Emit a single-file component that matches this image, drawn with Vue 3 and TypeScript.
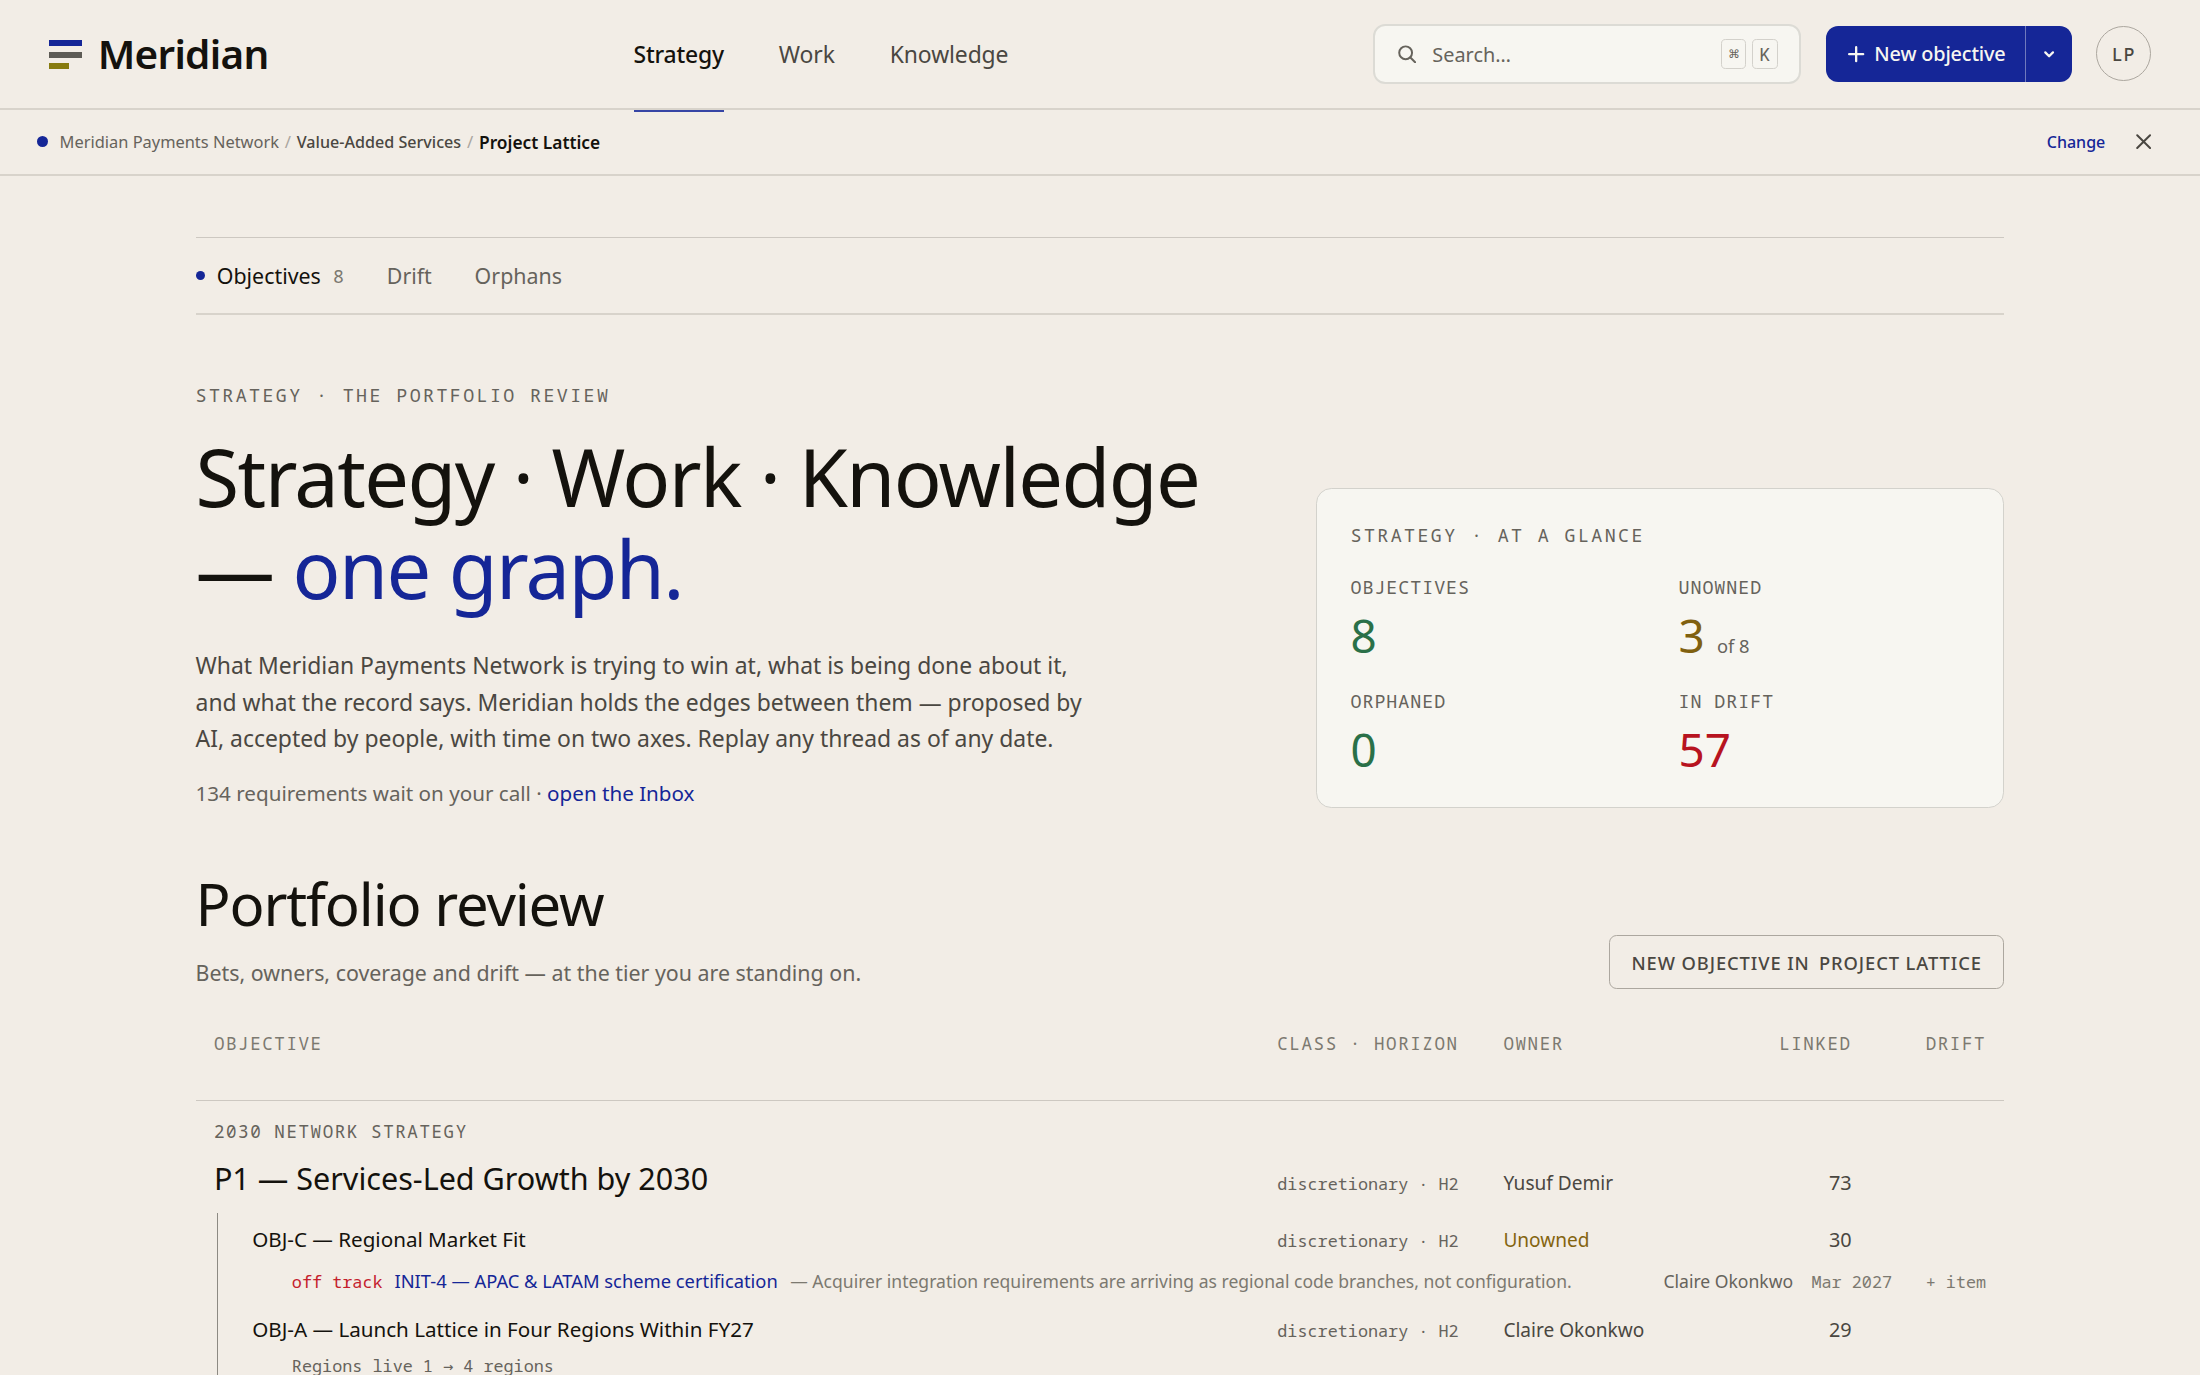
<script setup lang="ts">
interface Stat {
  label: string
  value: string
  tone: string
  note?: string
}

interface ObjectiveRow {
  title: string
  horizon: string
  owner: string
  unowned?: boolean
  linked: number
}

const navItems: string[] = ['Strategy', 'Work', 'Knowledge']

const stats: Stat[] = [
  { label: 'Objectives', value: '8', tone: 'good' },
  { label: 'Unowned', value: '3', tone: 'warn', note: 'of 8' },
  { label: 'Orphaned', value: '0', tone: 'good' },
  { label: 'In drift', value: '57', tone: 'bad' },
]

const pillar: ObjectiveRow = {
  title: 'P1 — Services-Led Growth by 2030',
  horizon: 'discretionary · H2',
  owner: 'Yusuf Demir',
  linked: 73,
}

const marketFit: ObjectiveRow = {
  title: 'OBJ-C — Regional Market Fit',
  horizon: 'discretionary · H2',
  owner: 'Unowned',
  unowned: true,
  linked: 30,
}

const launch: ObjectiveRow = {
  title: 'OBJ-A — Launch Lattice in Four Regions Within FY27',
  horizon: 'discretionary · H2',
  owner: 'Claire Okonkwo',
  linked: 29,
}
</script>

<template>
  <div class="page">
    <header class="topbar">
      <div class="brand">
        <span class="mark"><i class="m1"></i><i class="m2"></i><i class="m3"></i></span>
        <span class="wordmark">Meridian</span>
      </div>
      <nav class="nav">
        <a v-for="(item, i) in navItems" :key="item" :class="{ active: i === 0 }">{{ item }}</a>
      </nav>
      <div class="actions">
        <div class="search">
          <svg class="search-icon" viewBox="0 0 12 12" fill="none" stroke="currentColor" stroke-width="1.3" stroke-linecap="round">
            <circle cx="5" cy="5.1" r="4.2" />
            <path d="M8.1 8.2 11.2 11.3" />
          </svg>
          <span class="placeholder">Search…</span>
          <span class="keys"><kbd class="cmd">⌘</kbd><kbd>K</kbd></span>
        </div>
        <div class="split">
          <button class="create">
            <svg class="plus" viewBox="0 0 12 12" fill="none" stroke="currentColor" stroke-width="1.5" stroke-linecap="round">
              <path d="M6 1.4v9.2M1.4 6h9.2" />
            </svg>
            New objective
          </button>
          <button class="more" aria-label="More">
            <svg viewBox="0 0 8 8" fill="none" stroke="currentColor" stroke-width="1.5" stroke-linecap="round" stroke-linejoin="round">
              <path d="M1.5 2.9 4 5.4l2.5-2.5" />
            </svg>
          </button>
        </div>
        <div class="avatar">LP</div>
      </div>
    </header>

    <div class="context">
      <span class="context-dot"></span>
      <span class="crumb">Meridian Payments Network</span>
      <span class="sep">/</span>
      <span class="crumb mid">Value-Added Services</span>
      <span class="sep">/</span>
      <span class="crumb here">Project Lattice</span>
      <a class="change">Change</a>
      <svg class="close" viewBox="0 0 10 10" fill="none" stroke="currentColor" stroke-width="1.3" stroke-linecap="round">
        <path d="M.8.8l8.4 8.4M9.2.8L.8 9.2" />
      </svg>
    </div>

    <main>
      <div class="tabs">
        <a class="tab active"><span class="tab-dot"></span>Objectives<span class="count">8</span></a>
        <a class="tab">Drift</a>
        <a class="tab">Orphans</a>
      </div>

      <section class="hero">
        <div class="intro">
          <p class="eyebrow">Strategy · The portfolio review</p>
          <h1>Strategy · Work · Knowledge<br />— <em>one graph.</em></h1>
          <p class="lede">
            What Meridian Payments Network is trying to win at, what is being done about it,<br />
            and what the record says. Meridian holds the edges between them — proposed by<br />
            AI, accepted by people, with time on two axes. Replay any thread as of any date.
          </p>
          <p class="waiting">134 requirements wait on your call · <a>open the Inbox</a></p>
        </div>
        <aside class="glance">
          <p class="glance-title">Strategy · At a glance</p>
          <div class="stats">
            <div v-for="s in stats" :key="s.label" class="stat">
              <div class="stat-label">{{ s.label }}</div>
              <div class="stat-value" :class="s.tone">
                {{ s.value }}<span v-if="s.note" class="note">{{ s.note }}</span>
              </div>
            </div>
          </div>
        </aside>
      </section>

      <section class="review-head">
        <div>
          <h2>Portfolio review</h2>
          <p class="sub">Bets, owners, coverage and drift — at the tier you are standing on.</p>
        </div>
        <button class="outline"><span>New objective in</span><span>Project Lattice</span></button>
      </section>

      <section class="table">
        <div class="grid thead">
          <span>Objective</span><span>Class · Horizon</span><span>Owner</span>
          <span class="right">Linked</span><span class="right">Drift</span>
        </div>
        <p class="group">2030 Network Strategy</p>
        <div class="grid row pillar">
          <span class="title">{{ pillar.title }}</span>
          <span class="horizon">{{ pillar.horizon }}</span>
          <span class="owner">{{ pillar.owner }}</span>
          <span class="linked">{{ pillar.linked }}</span>
        </div>
        <div class="children">
          <div class="grid row child">
            <span class="title">{{ marketFit.title }}</span>
            <span class="horizon">{{ marketFit.horizon }}</span>
            <span class="owner" :class="{ unowned: marketFit.unowned }">{{ marketFit.owner }}</span>
            <span class="linked">{{ marketFit.linked }}</span>
          </div>
          <div class="initiative">
            <span class="status">off track</span>
            <a class="init-name">INIT-4 — APAC &amp; LATAM scheme certification</a>
            <span class="reason">— Acquirer integration requirements are arriving as regional code branches, not configuration.</span>
            <span class="init-owner">Claire Okonkwo</span>
            <span class="due">Mar 2027</span>
            <span class="add">+ item</span>
          </div>
          <div class="grid row child">
            <span class="title">{{ launch.title }}</span>
            <span class="horizon">{{ launch.horizon }}</span>
            <span class="owner">{{ launch.owner }}</span>
            <span class="linked">{{ launch.linked }}</span>
          </div>
          <div class="measure">Regions live 1 <span class="arrow">→</span> 4 regions</div>
        </div>
      </section>
    </main>
  </div>
</template>

<style>
/* 1rem = ten design units on the 1440-unit wide canvas */
html {
  font-size: 15.27778px;
  background: #f2ede6;
}
body {
  margin: 0;
  overflow: hidden;
}
</style>

<style scoped>
* {
  box-sizing: border-box;
}
p, h1, h2 {
  margin: 0;
  font-weight: 400;
}
button {
  font: inherit;
  border: 0;
  background: none;
  padding: 0;
}
.page {
  --ink: #14120d;
  --ink-2: #4a4741;
  --ink-3: #66635c;
  --ink-4: #7c7970;
  --blue: #152697;
  --line: #cdc8c1;
  --card: #f7f6f1;
  --mono: "Noto Sans Mono", "DejaVu Sans Mono", monospace;
  width: 144rem;
  height: 90rem;
  overflow: hidden;
  background: #f2ede6;
  color: var(--ink);
  font-family: "Noto Sans", sans-serif;
  font-size: 1.4rem;
  white-space: nowrap;
}

/* Top bar */
.topbar {
  display: flex;
  height: 7.2rem;
  padding: 0 3.2rem;
  border-bottom: 2px solid #d8d3cb;
  align-items: center;
}
.brand {
  display: flex;
  align-items: center;
  width: 38.27rem;
}
.mark {
  display: flex;
  flex-direction: column;
  gap: 6px;
  width: 2.2rem;
  margin-right: 1rem;
  padding-top: 1px;
}
.mark i {
  display: block;
  height: 6px;
}
.m1 { background: var(--blue); }
.m2 { background: #5d5b55; }
.m3 { background: #877b0f; width: 1.3rem; margin-top: -1px; }
.wordmark {
  font-size: 2.65rem;
  font-weight: 600;
  letter-spacing: -0.018em;
  line-height: 3.2rem;
}
.nav {
  display: flex;
  gap: 3.6rem;
  align-self: stretch;
}
.nav a {
  display: flex;
  align-items: center;
  position: relative;
  font-size: 1.5rem;
  letter-spacing: -0.005em;
  color: var(--ink-2);
}
.nav a.active {
  color: var(--ink);
  font-weight: 500;
  letter-spacing: -0.009em;
}
.nav a.active::after {
  content: "";
  position: absolute;
  left: 0;
  right: 0;
  bottom: -4px;
  height: 2px;
  background: #3745a5;
}
.actions {
  display: flex;
  align-items: center;
  margin-left: auto;
}
.search {
  display: flex;
  align-items: center;
  width: 28rem;
  height: 3.9rem;
  padding: 0 1.35rem 0 1.5rem;
  border: 2px solid #dcdbd5;
  border-radius: 0.8rem;
  background: var(--card);
  color: var(--ink-3);
}
.search-icon {
  width: 1.2rem;
  height: 1.2rem;
  margin-right: 1.05rem;
}
.placeholder {
  padding-top: 0.12rem;
  font-size: 1.3rem;
}
.keys {
  display: flex;
  gap: 0.36rem;
  margin-left: auto;
}
kbd {
  display: flex;
  align-items: center;
  justify-content: center;
  width: 1.72rem;
  height: 1.9rem;
  border: 1.5px solid #d3d1cb;
  border-radius: 0.3rem;
  font-family: var(--mono);
  font-size: 1.2rem;
}
.cmd {
  width: 1.65rem;
  font-size: 1.1rem;
}
.split {
  display: flex;
  width: 16.1rem;
  height: 3.7rem;
  margin-left: 1.63rem;
  border-radius: 0.8rem;
  overflow: hidden;
  background: var(--blue);
  color: #f7f6f1;
}
.create {
  display: flex;
  align-items: center;
  width: 13.05rem;
  padding-left: 1.4rem;
  font-size: 1.3rem;
  font-weight: 500;
  letter-spacing: -0.008em;
  color: inherit;
}
.plus {
  width: 1.2rem;
  height: 1.2rem;
  margin-right: 0.58rem;
}
.more {
  display: flex;
  flex: 1;
  align-items: center;
  justify-content: center;
  border-left: 1px solid #6f79bd;
  color: inherit;
}
.more svg {
  width: 0.8rem;
  height: 0.8rem;
}
.avatar {
  display: flex;
  align-items: center;
  justify-content: center;
  width: 3.6rem;
  height: 3.6rem;
  margin-left: 1.6rem;
  border: 1px solid #aca79f;
  border-radius: 50%;
  font-family: var(--mono);
  font-size: 1.2rem;
  font-weight: 500;
  letter-spacing: 0.05em;
  color: var(--ink-2);
}

/* Context strip */
.context {
  display: flex;
  align-items: center;
  height: 4.3rem;
  padding: 0 3.2rem 0 2.4rem;
  border-bottom: 2px solid #d8d3cb;
  font-size: 1.1rem;
}
.context-dot {
  width: 11px;
  height: 11px;
  margin-right: 0.78rem;
  border-radius: 50%;
  background: var(--blue);
}
.crumb { font-size: 1.075rem; color: var(--ink-3); }
.mid { font-size: 1.055rem; color: var(--ink-2); font-weight: 500; }
.here { font-size: 1.135rem; color: var(--ink); font-weight: 600; }
.sep { margin: 0 0.38rem; color: #aaa69f; }
.change {
  margin-left: auto;
  font-size: 1.05rem;
  color: var(--blue);
  font-weight: 500;
}
.close {
  width: 1rem;
  height: 1rem;
  margin-left: 2rem;
  color: var(--ink-2);
}

/* Content */
main {
  padding: 4rem 12.8rem 0;
}
.tabs {
  display: flex;
  align-items: center;
  gap: 2.8rem;
  height: 5.1rem;
  padding-top: 0.04rem;
  border-top: 1px solid var(--line);
  border-bottom: 2px solid #d8d3cb;
  font-size: 1.4rem;
}
.tab {
  display: flex;
  align-items: center;
  color: var(--ink-3);
}
.tab.active { color: var(--ink); }
.tab-dot {
  width: 9px;
  height: 9px;
  margin-right: 0.8rem;
  border-radius: 50%;
  background: var(--blue);
}
.count {
  margin-left: 0.8rem;
  font-family: var(--mono);
  font-size: 1.2rem;
  color: var(--ink-4);
}
.hero {
  display: flex;
  justify-content: space-between;
  align-items: flex-end;
  margin-top: 4.35rem;
}
.eyebrow, .glance-title {
  font-family: var(--mono);
  font-size: 1.2rem;
  line-height: 1.8rem;
  letter-spacing: 0.13em;
  text-transform: uppercase;
  color: var(--ink-3);
}
h1 {
  margin-top: 1.46rem;
  font-size: 5.2rem;
  line-height: 6rem;
  letter-spacing: -0.02em;
}
h1 em {
  font-style: normal;
  color: var(--blue);
}
.lede {
  margin-top: 2.21rem;
  font-size: 1.5rem;
  line-height: 2.39rem;
  color: var(--ink-2);
}
.waiting {
  margin-top: 1.38rem;
  font-size: 1.35rem;
  line-height: 1.9rem;
  color: var(--ink-3);
}
.waiting a { color: var(--blue); }
.glance {
  width: 45.07rem;
  height: 20.95rem;
  padding: 2.05rem 2.2rem;
  border: 1.5px solid #d3d2cc;
  border-radius: 1rem;
  background: var(--card);
}
.glance-title { line-height: 2rem; }
.stats {
  display: grid;
  grid-template-columns: 1fr 1fr;
  column-gap: 2.4rem;
  margin-top: 1.46rem;
  row-gap: 1.57rem;
}
.stat-label {
  font-family: var(--mono);
  font-size: 1.2rem;
  line-height: 1.8rem;
  letter-spacing: 0.052em;
  text-transform: uppercase;
  color: var(--ink-3);
}
.stat-value {
  margin-top: 0.5rem;
  font-size: 3rem;
  line-height: 3.6rem;
}
.good { color: #2a7048; }
.warn { color: #80600f; }
.bad { color: #b71320; }
.note {
  margin-left: 0.8rem;
  font-size: 1.2rem;
  line-height: 1;
  color: var(--ink-3);
}
.review-head {
  display: flex;
  justify-content: space-between;
  align-items: flex-end;
  margin-top: 4rem;
}
h2 {
  font-size: 3.8rem;
  line-height: 4.6rem;
  letter-spacing: -0.02em;
}
.sub {
  margin-top: 1.16rem;
  font-size: 1.4rem;
  line-height: 2.1rem;
  color: var(--ink-3);
}
.outline {
  display: flex;
  align-items: center;
  justify-content: center;
  gap: 0.6rem;
  width: 25.9rem;
  height: 3.5rem;
  border: 1px solid #aca79f;
  border-radius: 0.5rem;
  font-size: 1.2rem;
  font-weight: 500;
  letter-spacing: 0.05em;
  text-transform: uppercase;
  color: var(--ink-2);
}

/* Portfolio table */
.table { margin-top: 2.36rem; }
.grid {
  display: grid;
  grid-template-columns: 1fr 14.8rem 14rem 8.8rem 8.8rem;
  padding: 0 1.2rem;
  align-items: baseline;
}
.thead {
  height: 5rem;
  padding-top: 0.3rem;
  border-bottom: 1px solid var(--line);
  font-family: var(--mono);
  font-size: 1.15rem;
  line-height: 1.8rem;
  letter-spacing: 0.089em;
  text-transform: uppercase;
  color: var(--ink-4);
}
.right { text-align: right; }
.group {
  padding: 1.12rem 1.2rem 0;
  font-family: var(--mono);
  font-size: 1.15rem;
  line-height: 1.8rem;
  letter-spacing: 0.089em;
  text-transform: uppercase;
  color: var(--ink-3);
}
.pillar { height: 4.4rem; }
.pillar .title {
  font-size: 2rem;
  line-height: 4.28rem;
}
.horizon {
  font-family: var(--mono);
  font-size: 1.1rem;
  color: var(--ink-3);
}
.owner {
  font-size: 1.25rem;
  color: var(--ink-2);
}
.linked {
  font-size: 1.3rem;
  color: var(--ink-2);
  text-align: right;
}
.unowned { color: #84640f; }
.children {
  margin-left: 1.4rem;
  border-left: 1px solid #8d8a83;
}
.child {
  height: 3.3rem;
  padding-left: 2.24rem;
}
.child .title {
  font-size: 1.35rem;
  line-height: 3.42rem;
}
.initiative {
  display: flex;
  align-items: baseline;
  height: 2.61rem;
  padding: 0 1.2rem 0 4.84rem;
  font-size: 1.2rem;
  line-height: 2.26rem;
}
.status, .due, .add {
  font-family: var(--mono);
  font-size: 1.1rem;
}
.status { color: #c4202c; }
.init-name {
  margin-left: 0.78rem;
  color: var(--blue);
}
.reason {
  margin-left: 0.82rem;
  font-size: 1.15rem;
  color: var(--ink-4);
}
.init-owner {
  margin-left: auto;
  font-size: 1.15rem;
  color: var(--ink-3);
}
.due { margin-left: 1.2rem; color: var(--ink-4); }
.add { margin-left: 2.2rem; color: var(--ink-4); }
.measure {
  padding-left: 4.84rem;
  height: 2rem;
  font-family: var(--mono);
  font-size: 1.1rem;
  line-height: 1.53rem;
  color: var(--ink-3);
}
.arrow {
  font-family: "DejaVu Sans Mono", monospace;
  line-height: 1;
}
</style>
